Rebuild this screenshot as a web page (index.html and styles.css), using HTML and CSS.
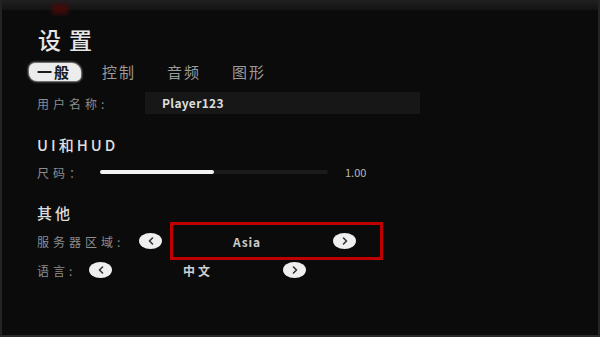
FILE: index.html
```html
<!DOCTYPE html>
<html lang="zh">
<head>
<meta charset="utf-8">
<link rel="stylesheet" href="styles.css">
</head>
<body>
<div class="screen">
  <div class="topbar"><span class="reddot"></span></div>
  <div class="content">
    <h1 class="title">设置</h1>
    <nav class="tabs">
      <span class="tab active">一般</span>
      <span class="tab">控制</span>
      <span class="tab">音频</span>
      <span class="tab">图形</span>
    </nav>
    <div class="row row-name">
      <span class="label">用户名称:</span>
      <div class="input">Player123</div>
    </div>
    <h2 class="heading h-ui">UI和HUD</h2>
    <div class="row row-slider">
      <span class="label">尺码：</span>
      <div class="track"><div class="fill" style="width:50%"></div></div>
      <span class="value">1.00</span>
    </div>
    <h2 class="heading h-other">其他</h2>
    <div class="row row-server">
      <span class="label">服务器区域:</span>
      <span class="btn"><svg width="6" height="8" viewBox="0 0 6 8"><path d="M4.5 1 L1.5 4 L4.5 7" fill="none" stroke="#333" stroke-width="1.6" stroke-linecap="round" stroke-linejoin="round"/></svg></span>
      <div class="selbox">
        <span class="selval">Asia</span>
        <span class="btn"><svg width="6" height="8" viewBox="0 0 6 8"><path d="M1.5 1 L4.5 4 L1.5 7" fill="none" stroke="#333" stroke-width="1.6" stroke-linecap="round" stroke-linejoin="round"/></svg></span>
      </div>
    </div>
    <div class="row row-lang">
      <span class="label">语言:</span>
      <span class="btn"><svg width="6" height="8" viewBox="0 0 6 8"><path d="M4.5 1 L1.5 4 L4.5 7" fill="none" stroke="#333" stroke-width="1.6" stroke-linecap="round" stroke-linejoin="round"/></svg></span>
      <span class="langval">中文</span>
      <span class="btn"><svg width="6" height="8" viewBox="0 0 6 8"><path d="M1.5 1 L4.5 4 L1.5 7" fill="none" stroke="#333" stroke-width="1.6" stroke-linecap="round" stroke-linejoin="round"/></svg></span>
    </div>
  </div>
</div>
</body>
</html>
```
FILE: styles.css
```css
* { box-sizing: border-box; margin: 0; padding: 0; }
html, body { width: 600px; height: 337px; overflow: hidden; background: #0b0b0c; }
body { font-family: "Noto Sans CJK SC", "Noto Sans", sans-serif; }

.screen {
  width: 600px; height: 337px;
  background: #0b0b0c;
  border-left: 2px solid #242424;
  border-right: 2px solid #242424;
  border-bottom: 2px solid #2a2a2a;
  display: flex; flex-direction: column;
}
.topbar {
  height: 10px;
  background: linear-gradient(#202020 0%, #141414 100%);
  padding-left: 50px;
  flex: none;
}
.reddot {
  display: block;
  width: 16px; height: 10px;
  margin-top: 4px;
  background: #420b0b;
  filter: blur(2px);
}
.content { padding-left: 35px; display: flex; flex-direction: column; }

.title {
  font-size: 23px; font-weight: 500; line-height: 26px;
  color: #e6e6e6; letter-spacing: 8px;
  margin-top: 16px; margin-left: 1px;
}
.tabs { display: flex; gap: 30px; height: 18px; margin-top: 11px; align-items: center; }
.tab {
  font-size: 15px; line-height: 18px; letter-spacing: 2px;
  color: #9a9a9a; width: 35px; white-space: nowrap;
}
.tab.active {
  color: #1a1a1a; font-weight: 700;
  background: #ececec;
  border-radius: 6px 9px 5px 8px;
  box-shadow: 0 0 2px 1px rgba(236,236,236,0.6);
  margin-left: -8px; padding-left: 8px; width: 52px;
  margin-right: -9px;
}

.row { display: flex; align-items: center; }
.label { font-size: 12px; color: #8c8c8c; letter-spacing: 4px; white-space: nowrap; flex: none; }

.row-name { height: 22px; margin-top: 11px; }
.row-name .label { width: 108px; }
.input {
  width: 275px; height: 22px;
  background: #171717;
  padding-left: 17px;
  font-size: 12px; font-weight: 700; color: #dcdcdc; line-height: 22px;
  letter-spacing: 0.3px;
}

.heading {
  font-size: 15px; font-weight: 500; line-height: 18px;
  color: #dedede; letter-spacing: 3px;
}
.h-ui { margin-top: 22px; }
.row-slider { height: 18px; margin-top: 9px; }
.row-slider .label { width: 63px; }
.track { width: 228px; height: 4px; background: #1b1b1b; border-radius: 2px; }
.fill { height: 4px; background: #f4f4f4; border-radius: 2px; }
.value { margin-left: 17px; font-size: 11px; color: #b8b8b8; }

.h-other { margin-top: 23px; }

.btn {
  width: 23px; height: 16px; border-radius: 50%;
  background: #efefef;
  display: flex; align-items: center; justify-content: center;
  flex: none;
}
.row-server { height: 38px; }
.row-server .label { width: 102px; }
.selbox {
  margin-left: 8px;
  width: 213px; height: 38px;
  border: 3px solid #c00000;
  display: flex; align-items: center;
}
.selval { margin-left: 60px; width: 100px; font-size: 12px; font-weight: 700; color: #c8c8c8; letter-spacing: 0.8px; }
.row-lang { height: 18px; margin-top: 1px; }
.row-lang .label { width: 52px; }
.langval { margin-left: 71px; width: 100px; font-size: 12px; font-weight: 700; color: #cfcfcf; letter-spacing: 3px; }
```
